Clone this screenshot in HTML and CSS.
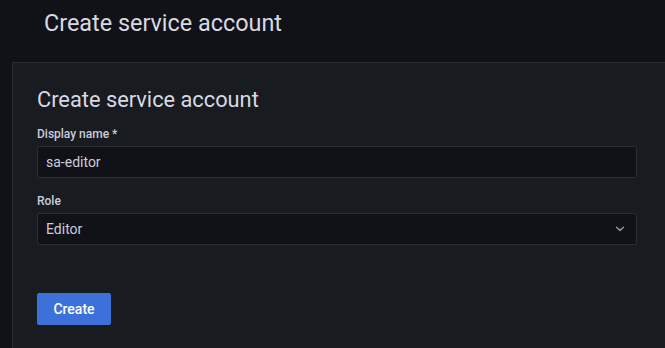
FILE: index.html
```html
<!DOCTYPE html>
<html>
<head>
<meta charset="utf-8">
<link rel="stylesheet" href="styles.css">
</head>
<body>
<div class="page">
  <header class="page-header">
    <h1 class="page-title">Create service account</h1>
  </header>
  <div class="card">
    <div class="form">
      <h2 class="card-title">Create service account</h2>
      <div class="field">
        <label class="label">Display name *</label>
        <div class="input">sa-editor</div>
      </div>
      <div class="field">
        <label class="label">Role</label>
        <div class="input select">
          <span>Editor</span>
          <svg class="chevron" width="10" height="6" viewBox="0 0 10 6"><path d="M1.5 1.2 L5 4.4 L8.5 1.2" fill="none" stroke="#8e929c" stroke-width="1.5" stroke-linecap="round" stroke-linejoin="round"/></svg>
        </div>
      </div>
      <button class="btn">Create</button>
    </div>
  </div>
</div>
</body>
</html>
```

FILE: styles.css
```css
html, body {
  margin: 0;
  padding: 0;
  background: #111217;
  overflow: hidden;
  font-family: Roboto, "Liberation Sans", sans-serif;
  color: #ccccdc;
}
.page {
  width: 665px;
  height: 348px;
  display: flex;
  flex-direction: column;
  padding-left: 12px;
  box-sizing: border-box;
}
.page-header {
  flex-shrink: 0;
  height: 62px;
  padding: 9px 0 0 32px;
  box-sizing: border-box;
}
.page-title {
  margin: 0;
  font-size: 23.4px;
  font-weight: 400;
  line-height: 1.2;
  color: #d8d9e3;
}
.card {
  flex: 1;
  margin-right: -20px;
  background: #181b1f;
  border: 1px solid #2a2c31;
  padding: 24px;
}
.form {
  width: 600px;
}
.card-title {
  margin: 0 0 14px;
  font-size: 21.8px;
  font-weight: 400;
  line-height: 26px;
  color: #d8d9e3;
}
.field {
  margin-bottom: 16px;
}
.label {
  display: block;
  font-size: 12px;
  font-weight: 500;
  line-height: 15px;
  margin-bottom: 4px;
  color: #ccccdc;
}
.input {
  height: 32px;
  box-sizing: border-box;
  background: #111217;
  border: 1px solid #2c2e34;
  border-radius: 2px;
  padding: 0 8px;
  font-size: 14px;
  display: flex;
  align-items: center;
  color: #ccccdc;
}
.select {
  justify-content: space-between;
  padding-right: 11px;
}
.btn {
  margin-top: 32px;
  height: 32px;
  width: 74px;
  border: none;
  border-radius: 2px;
  background: #3d71d9;
  color: #ffffff;
  font-family: Roboto, "Liberation Sans", sans-serif;
  font-size: 14px;
  font-weight: 500;
  padding: 0;
}
```
